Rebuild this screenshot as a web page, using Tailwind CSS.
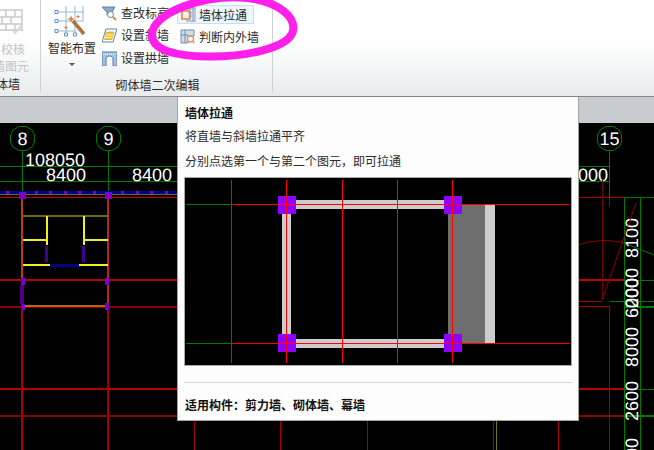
<!DOCTYPE html>
<html lang="zh-CN">
<head>
<meta charset="UTF-8">
<title>墙体拉通</title>
<script src="https://cdn.jsdelivr.net/npm/@tailwindcss/browser@4"></script>
</head>
<body class="bg-black">
<div class="relative w-[654px] h-[450px] overflow-hidden flex flex-col font-['Noto_Sans_CJK_SC',sans-serif] text-[12px] leading-none text-[#2b2b2b]">

  <!-- ribbon -->
  <div class="h-[97px] shrink-0 flex border-b border-[#858585] bg-gradient-to-b from-white from-45% to-[#e8eaeb]">
    <div class="w-[41px] h-[92px] shrink-0 border-r border-[#cfd2d4] overflow-hidden relative flex flex-col items-start">
      <svg class="mt-[8px]" width="26" height="26" viewBox="0 0 26 26" fill="none" stroke="#c9c9c9" stroke-width="1.5"><path d="M-1 2H22V22H-1M-1 9H22M-1 16H22M6 2V9M15 2V9M2 9V16M11 9V16M6 16V22M15 16V22"/><path d="M12 21l3 4 7-8" stroke="#d8d8d8" stroke-width="2"/></svg>
      <div class="mt-[9px] ml-[1px] text-[#c2c2c2]">校核</div>
      <div class="mt-[5px] ml-[-7px] text-[#c2c2c2] whitespace-nowrap">墙图元</div>
      <div class="mt-[6px] ml-[-4px] whitespace-nowrap">体墙</div>
    </div>

    <div class="w-[232px] h-[92px] shrink-0 border-r border-[#cfd2d4] flex flex-col">
      <div class="flex h-[76px]">
        <div class="w-[61px] pl-[1px] flex flex-col items-center">
          <svg class="mt-[5px] ml-[-4px]" width="32" height="32" viewBox="0 0 32 32" fill="none">
            <path d="M3 7H30M3 16H30M3 26H22M12 1V30M21 1V30M29 1V15" stroke="#8fb8e4" stroke-width="1"/>
            <path d="M1 5.500h3v3H1zM1 14.500h3v3H1zM1 24.500h3v3H1zM10.500 28h3v3h-3zM19.500 28h3v3h-3z" fill="#fff" stroke="#5f8fcb"/>
            <path d="M19 16L30 29" stroke="#a8743f" stroke-width="3.500"/>
            <path d="M17 10l1 3 3 1-3 1-1 3-1-3-3-1 3-1zM24 9l.6 2 2 .6-2 .6-.6 2-.6-2-2-.6 2-.6zM12 20l.6 2 2 .6-2 .6-.6 2-.6-2-2-.6 2-.6z" fill="#e9803a"/>
          </svg>
          <div class="mt-[5px] whitespace-nowrap">智能布置</div>
          <div class="mt-[9px] w-0 h-0 border-x-[3px] border-x-transparent border-t-[3px] border-t-[#555]"></div>
        </div>
        <div class="flex flex-col w-[74px] pt-[5px] gap-[6px]">
          <div class="h-[16px] flex items-center gap-[4px] whitespace-nowrap">
            <svg width="15" height="15" viewBox="0 0 15 15"><path d="M0 1H13L10 6V9H5V6Z" fill="#8ea9c6" stroke="#5e83ab"/><circle cx="8.5" cy="8.5" r="3" fill="#fff" stroke="#5e83ab"/><path d="M11 11l3 3" stroke="#e8872d" stroke-width="2"/></svg>
            <span>查改标高</span>
          </div>
          <div class="h-[16px] flex items-center gap-[4px] whitespace-nowrap">
            <svg width="15" height="15" viewBox="0 0 15 15"><path d="M4 1H15L11 14H0Z" fill="#fff" stroke="#5e83ab"/><path d="M4.500 4H12L10 11.500H2.500Z" fill="#f5c634" stroke="#c99a20" stroke-width=".6"/><path d="M3.500 7H11.500M3 9.500H10.500" stroke="#fff" stroke-width=".7"/></svg>
            <span>设置斜墙</span>
          </div>
          <div class="h-[16px] mt-[1px] flex items-center gap-[4px] whitespace-nowrap">
            <svg width="15" height="15" viewBox="0 0 15 15" fill="none"><path d="M0 1H15V15H11V8C11 6 9.500 5 7.500 5S4 6 4 8V15H0Z" fill="#a9c3de" stroke="#4e79ab"/><path d="M1 3H14" stroke="#fff" stroke-dasharray="1 1"/></svg>
            <span>设置拱墙</span>
          </div>
        </div>
        <div class="flex flex-col pt-[5px] gap-[3px] ml-[1px]">
          <div class="w-[77px] h-[19px] flex items-center gap-[3px] pl-[3px] border border-[#c5dff3] bg-[#eef6fc] whitespace-nowrap">
            <svg width="15" height="15" viewBox="0 0 15 15" fill="none"><path d="M1 4H9V12H1Z" stroke="#e8802a" stroke-width="1.500"/><path d="M5 2H12V14H5" stroke="#7c9cbf" stroke-width="1.200"/><path d="M11 1h3v14h-3M7 6h4M7 9h4" stroke="#7c9cbf"/></svg>
            <span>墙体拉通</span>
          </div>
          <div class="h-[19px] flex items-center gap-[4px] pl-[3px] whitespace-nowrap">
            <svg width="15" height="15" viewBox="0 0 15 15" fill="none"><path d="M1 1H14V7H8V14H1Z" fill="#cfdcea" stroke="#6f8fb0"/><path d="M5 1V14M1 6H8" stroke="#6f8fb0"/><circle cx="10.500" cy="10" r="3" fill="#fff" stroke="#e9906a" stroke-width="1.300"/><path d="M12.500 12l2 2" stroke="#e9906a" stroke-width="1.500"/></svg>
            <span>判断内外墙</span>
          </div>
        </div>
      </div>
      <div class="text-center mt-[3px] pl-[2px]">砌体墙二次编辑</div>
    </div>
  </div>

  <!-- title strip of the drawing window -->
  <div class="h-[26px] shrink-0 bg-[#c8cbd0]"></div>

  <!-- cad canvas -->
  <svg class="flex-1 block bg-black" width="654" height="327" viewBox="0 123 654 327" fill="none" shape-rendering="crispEdges" font-family="Liberation Sans" font-size="18" text-rendering="geometricPrecision">
    <g stroke="#007a00">
      <path d="M0 166.500H178M0 181.500H178M578 166.500H609M578 181.500H609"/>
      <path d="M22.500 150V195M108.500 150V195M609.500 150V197M624.500 197V450M640.500 197V450"/>
      <path d="M624 197.500H654M624 280.500H654M610 301.500H654M624 307H654M624 389.500H654M624 416H654" stroke-width="1.500"/>
      <g shape-rendering="auto">
        <path d="M19 126.500H26L32 130L34.500 135V142L32 147L26 150.500H19L13 147L10.500 142V135L13 130Z"/>
        <path d="M105 126.500H112L118 130L120.500 135V142L118 147L112 150.500H105L99 147L96.500 142V135L99 130Z"/>
        <path d="M606 126.500H613L619 130L621.500 135V142L619 147L613 150.500H606L600 147L597.500 142V135L600 130Z"/>
        <path d="M624 243L654 255"/>
      </g>
    </g>
    <g fill="#fff" stroke="none" shape-rendering="auto">
      <text x="22.500" y="145" text-anchor="middle">8</text>
      <text x="108.500" y="145" text-anchor="middle">9</text>
      <text x="609.500" y="145" text-anchor="middle">15</text>
      <text x="25" y="165.500">108050</text>
      <text x="46" y="180.500">8400</text>
      <text x="132" y="180.500">8400</text>
      <text x="568" y="180.500">8000</text>
      <text transform="translate(638 258) rotate(-90)">8100</text>
      <text transform="translate(638 308) rotate(-90)">2000</text>
      <text transform="translate(638 318) rotate(-90)">6000</text>
      <text transform="translate(638 367) rotate(-90)">8000</text>
      <text transform="translate(638 421) rotate(-90)">2600</text>
      <text transform="translate(638 468) rotate(-90)">000</text>
    </g>
    <!-- grid lines -->
    <g stroke="#a80000">
      <path d="M22 197V450M108 197V450" stroke-width="2"/>
      <path d="M0 280H178M578 280H624M0 389H178M578 389H624" stroke="#b80000" stroke-width="2"/>
      <path d="M0 307H178M0 416H178M578 416H624" stroke-width="2" stroke="#8e0000"/>
      <path d="M0 197.500H178" stroke="#c00000"/>
      <path d="M578 197.500H624M609.500 197V207M578 301.500H602M578 306.500H609M609.500 306V450"/>
      <path d="M602.500 180V300" stroke="#700000"/>
      <g shape-rendering="auto" stroke="#8e0000">
        <path d="M602 300L636 203"/>
        <path d="M578 245Q600 237 624 243"/>
      </g>
      <path d="M194.500 420V450M280.500 420V450M367.500 420V450M493.500 420V450M558.500 420V450"/>
      <path d="M496.500 420V450" stroke="#77771a"/>
    </g>
    <!-- wall band -->
    <path d="M0 192.500H178" stroke="#000088" stroke-width="4"/>
    <path d="M0 194.500H178" stroke="#6b6b10"/>
    <!-- room -->
    <path d="M22 199V278" stroke="#c03a10" stroke-width="2"/>
    <path d="M108 199V304" stroke="#b82a10" stroke-width="2"/>
    <path d="M23 215.500H108" stroke="#6b6b10" stroke-width="2"/>
    <g stroke="#f0f020" stroke-width="2">
      <path d="M46.500 216V245M83.500 216V245M23 240H46M84 240H108M23 265H50M79 265H108"/>
    </g>
    <path d="M50 265H79" stroke="#000088" stroke-width="3"/>
    <path d="M46.500 246V262M83.500 246V262" stroke="#400090" stroke-width="3"/>
    <path d="M22 285V304" stroke="#500080" stroke-width="4"/>
    <path d="M25 306H105" stroke="#b06a10" stroke-width="2"/>
    <g fill="#7a00d0">
      <rect x="6" y="191" width="3" height="3"/><rect x="35" y="191" width="3" height="3"/><rect x="49" y="191" width="3" height="3"/><rect x="64" y="191" width="3" height="3"/><rect x="78" y="191" width="3" height="3"/><rect x="93" y="191" width="3" height="3"/><rect x="121" y="191" width="3" height="3"/><rect x="136" y="191" width="3" height="3"/><rect x="150" y="191" width="3" height="3"/><rect x="165" y="191" width="3" height="3"/>
      <rect x="19" y="192" width="7" height="7"/><rect x="105" y="192" width="7" height="7"/>
      <rect x="22" y="278" width="3" height="7"/><rect x="105" y="278" width="4" height="7"/>
      <rect x="22" y="304" width="3" height="6"/><rect x="105" y="303" width="4" height="7"/>
    </g>
  </svg>

  <!-- tooltip -->
  <div class="absolute left-[177px] top-[97px] w-[402px] h-[324px] bg-[#fdfdfd] border-x border-b border-[#a3a3a3] pl-[6px] pr-[6px] flex flex-col">
    <div class="font-bold text-[#111] mt-[10px] h-[12px] pl-[1px]">墙体拉通</div>
    <div class="mt-[11px] h-[12px] pl-[1px]">将直墙与斜墙拉通平齐</div>
    <div class="mt-[13px] h-[12px] pl-[1px]">分别点选第一个与第二个图元，即可拉通</div>
    <div class="mt-[10px] border border-[#aaaaaa] h-[189px] bg-black">
      <svg class="block" width="386" height="187" viewBox="185 178 386 187" fill="none" shape-rendering="crispEdges">
        <rect x="448" y="205" width="37" height="138" fill="#6e6e6e"/>
        <rect x="485" y="205" width="10" height="138" fill="#cccccc"/>
        <rect x="296" y="200" width="148" height="9" fill="#cccccc"/>
        <rect x="296" y="339" width="148" height="9" fill="#cccccc"/>
        <rect x="282" y="214" width="9" height="120" fill="#cccccc"/>
        <path d="M186 204.500H231M186 343.500H231" stroke="#007a00"/>
        <path d="M231 204.500H570M231 343.500H570M231.500 180V363M342.500 180V363M397.500 180V363" stroke="#ff0000"/>
        <g fill="#8f00ff">
          <rect x="278" y="196" width="18" height="18"/><rect x="444" y="196" width="18" height="18"/>
          <rect x="278" y="334" width="18" height="18"/><rect x="444" y="334" width="18" height="18"/>
        </g>
        <path d="M286.500 180V363M452.500 180V363" stroke="#ff0000"/>
        <path d="M278 204.500H296M444 204.500H462M278 343.500H296M444 343.500H462" stroke="#ff0000"/>
      </svg>
    </div>
    <div class="mt-[16px] border-t border-[#d4d4d4]"></div>
    <div class="mt-[16px] font-bold text-[#111] pl-[1px]">适用构件：剪力墙、砌体墙、幕墙</div>
  </div>

  <!-- hand drawn marker round the two buttons -->
  <svg class="absolute left-0 top-0 pointer-events-none" width="654" height="97" viewBox="0 0 654 97" fill="none">
    <path d="M152 35C152 12 205 -6 248 -2C280 2 296 18 293 31C289 48 245 57 208 56.500C175 56 152 50 152 35Z" stroke="#ff1fea" stroke-width="8"/>
  </svg>
</div>
</body>
</html>
